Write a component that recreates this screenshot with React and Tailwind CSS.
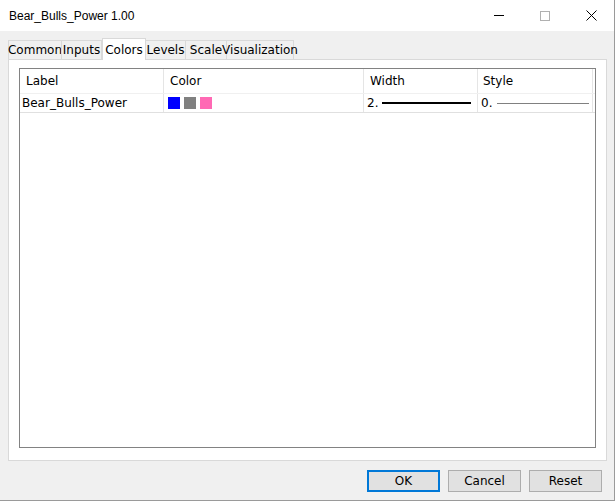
export default function App() {
  const tabs = [
    ["Common", 54], ["Inputs", 41], ["Colors", 44], ["Levels", 41], ["Scale", 42], ["Visualization", 68],
  ];
  return (
    <div className="w-[615px] h-[501px] bg-[#f0f0f0] flex flex-col text-[12px] text-black border-r border-b border-[#9a9a9a]" style={{ fontFamily: "Tahoma, 'DejaVu Sans', 'Liberation Sans', sans-serif" }}>
      <div className="h-[31px] bg-white flex items-center pl-[9px] shrink-0">
        <span className="text-[12px]" style={{ fontFamily: "'Liberation Sans', sans-serif" }}>Bear_Bulls_Power 1.00</span>
        <div className="ml-auto flex h-full">
          <div className="w-[46px] flex items-center justify-center"><div className="w-[10px] h-px bg-black" /></div>
          <div className="w-[46px] flex items-center justify-center"><div className="w-[10px] h-[10px] border border-[#b0b0b0]" /></div>
          <div className="w-[46px] flex items-center justify-center">
            <svg width="11" height="11" viewBox="0 0 11 11"><path d="M0.5 0.5L10.5 10.5M10.5 0.5L0.5 10.5" stroke="#000" strokeWidth="1" /></svg>
          </div>
        </div>
      </div>
      <div className="flex flex-col pl-[8px] pr-[7px] pt-[7px]">
        <div className="flex items-end h-[21px] pl-[1px]">
          {tabs.map(([t, w]) =>
            t === "Colors" ? (
              <div key={t} style={{ width: w }} className="h-[22px] bg-white border border-b-0 border-[#d9d9d9] flex items-center justify-center relative top-[1px] z-10">{t}</div>
            ) : (
              <div key={t} style={{ width: w }} className="h-[19px] bg-[#f0f0f0] border border-b-0 border-[#d9d9d9] -ml-px flex items-center justify-center">{t}</div>
            )
          )}
        </div>
        <div className="h-[402px] bg-white border border-[#d9d9d9] pt-[8px] px-[10px] pb-[12px] flex">
          <div className="flex-1 border border-[#828282] flex flex-col">
            <div className="flex h-[25px] border-b border-[#f0f0f0]">
              <div className="w-[144px] pl-[6px] flex items-center border-r border-[#e5e5e5]">Label</div>
              <div className="w-[200px] pl-[6px] flex items-center border-r border-[#e5e5e5]">Color</div>
              <div className="w-[114px] pl-[6px] flex items-center border-r border-[#e5e5e5]">Width</div>
              <div className="w-[115px] pl-[5px] flex items-center border-r border-[#e5e5e5]">Style</div>
            </div>
            <div className="flex h-[19px] border-b border-[#e0e0e0]">
              <div className="w-[144px] pl-[2px] flex items-center border-r border-[#e5e5e5]">Bear_Bulls_Power</div>
              <div className="w-[200px] pl-[4px] flex items-center gap-[4px] border-r border-[#e5e5e5]">
                <div className="w-[12px] h-[12px] bg-[#0000ff]" />
                <div className="w-[12px] h-[12px] bg-[#808080]" />
                <div className="w-[12px] h-[12px] bg-[#ff69b4]" />
              </div>
              <div className="w-[114px] pl-[3px] flex items-center gap-[4px] border-r border-[#e5e5e5]">
                <span>2.</span><div className="w-[89px] h-[2px] bg-black" />
              </div>
              <div className="w-[115px] pl-[3px] flex items-center gap-[5px] border-r border-[#e5e5e5]">
                <span>0.</span><div className="w-[92px] h-px bg-[#808080]" />
              </div>
            </div>
          </div>
        </div>
      </div>
      <div className="flex justify-end gap-[8px] pr-[12px] pt-[9px]">
        <button className="w-[73px] h-[22px] bg-[#e1e1e1] border-2 border-[#0078d7] flex items-center justify-center">OK</button>
        <button className="w-[73px] h-[22px] bg-[#e1e1e1] border border-[#adadad] flex items-center justify-center">Cancel</button>
        <button className="w-[73px] h-[22px] bg-[#e1e1e1] border border-[#adadad] flex items-center justify-center">Reset</button>
      </div>
    </div>
  );
}
